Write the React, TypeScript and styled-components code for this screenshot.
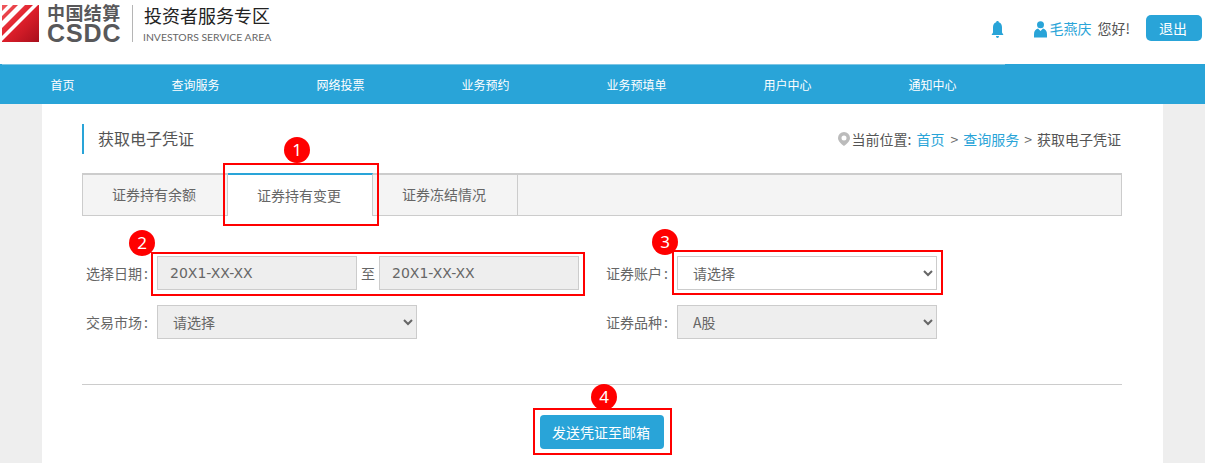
import React from "react";
import styled, { createGlobalStyle } from "styled-components";

const Global = createGlobalStyle`
  html, body { margin: 0; padding: 0; background: #eeeeee; height: 463px; overflow: hidden; }
  body { font-family: "Noto Sans CJK SC", "Liberation Sans", sans-serif; font-size: 14px; color: #666; }
  * { box-sizing: border-box; }
`;

const Page = styled.div`position: relative; width: 1205px; height: 463px; overflow: hidden;`;

const Header = styled.header`
  height: 64px; background: #fff; display: flex; justify-content: space-between;
  align-items: flex-start; padding: 5px 3px 0 2px;
`;
const Brand = styled.div`display: flex; align-items: flex-start;`;
const LogoMark = styled.svg`width: 37px; height: 37px; display: block; flex: none;`;
const LogoWords = styled.div`
  width: 74px; margin-left: 8px; display: flex; flex-direction: column; color: #58585a; height: 37px;
`;
const LogoCn = styled.span`font-size: 18px; line-height: 18px; font-weight: 700; letter-spacing: 0.4px; white-space: nowrap; margin-top: -2px;`;
const LogoEn = styled.span`
  font-family: "Liberation Sans", sans-serif; font-size: 25px; line-height: 19px; font-weight: 700;
  letter-spacing: 0.9px; white-space: nowrap; margin-top: 3px;
`;
const BrandRule = styled.div`width: 1px; height: 37px; background: #b5b5b5; margin: 0 11px 0 11px;`;
const BrandTitle = styled.div`display: flex; flex-direction: column;`;
const TitleCn = styled.span`font-size: 18px; line-height: 20px; color: #222; white-space: nowrap;`;
const TitleEn = styled.span`
  font-family: "Lato", sans-serif; font-size: 10.4px; line-height: 12px; margin-top: 6px; margin-left: -1px; color: #666; white-space: nowrap;
`;

const UserBar = styled.div`display: flex; align-items: center; height: 26px; margin-top: 10px;`;
const IconBell = styled.svg`width: 13px; height: 17px; fill: #29a4d8; margin-right: 30px; margin-top: 3px;`;
const IconUser = styled.svg`width: 13px; height: 17px; fill: #29a4d8; margin-right: 2px; margin-top: 3px;`;
const UserName = styled.span`color: #29a4d8; font-size: 14px; line-height: 20px; margin-right: 6px;`;
const Greeting = styled.span`color: #555; font-size: 14px; line-height: 20px; margin-right: 16px;`;
const Logout = styled.button`
  width: 56px; height: 26px; border: 0; border-radius: 5px; background: #29a4d8; color: #fff;
  font: inherit; font-size: 14px; padding: 0 2px 0 0;
`;

const Nav = styled.nav`height: 40px; background: #29a4d8; display: flex; padding-left: 2px;`;
const NavItem = styled.a`
  padding: 0 48.5px; line-height: 39px; height: 40px; color: #fff; font-size: 12px; white-space: nowrap;
  border-top: 1px solid #7fc6e4;
`;

const Content = styled.main`
  width: 1121px; height: 359px; margin-left: 42px; background: #fff; padding: 20px 41px 0 40px;
`;
const TitleRow = styled.div`display: flex; justify-content: space-between; align-items: center; height: 30px;`;
const PageTitle = styled.h1`
  margin: 0; font-size: 16px; line-height: 28px; padding-bottom: 2px; font-weight: 400; color: #555; border-left: 2px solid #29a4d8; padding-left: 14px;
`;
const Crumbs = styled.div`display: flex; align-items: center; color: #555; font-size: 14px; white-space: nowrap; padding-right: 1px;`;
const PinIcon = styled.svg`width: 12px; height: 14px; fill: #bbb; margin-right: 2px;`;
const CrumbLabel = styled.span`margin-right: 5px;`;
const CrumbLink = styled.a`color: #29a4d8;`;
const CrumbSep = styled.span<{ $gap?: number }>`margin: 0 5px 0 ${(p) => p.$gap ?? 5}px; color: #666;`;

const Tabs = styled.div`
  margin-top: 19px; height: 43px; display: flex; background: #f4f4f4;
  border: 1px solid #ccc; border-top-width: 2px;
`;
const Tab = styled.div<{ $active?: boolean }>`
  width: 145px; height: ${(p) => (p.$active ? "43px" : "41px")}; margin-top: ${(p) => (p.$active ? "-2px" : "0")};
  display: flex; align-items: center; justify-content: center; font-size: 14px; color: #666;
  background: ${(p) => (p.$active ? "#fff" : "transparent")};
  border-right: 1px solid #ccc;
  border-top: ${(p) => (p.$active ? "2px solid #29a4d8" : "0")};
  padding: 0 2px ${(p) => (p.$active ? "2px" : "4px")} 0;
`;

const FormGrid = styled.div`
  display: grid; grid-template-columns: 520px 520px; row-gap: 15px; margin-top: 40px; padding-left: 4px;
`;
const Field = styled.div`display: flex; align-items: center; height: 34px;`;
const FieldLabel = styled.label`width: 71px; flex: none; font-size: 14px; color: #666; white-space: nowrap;`;
const Colon = styled.span`margin-left: 2px;`;
const DateInput = styled.input`
  width: 200px; height: 34px; border: 1px solid #ccc; background: #eee; color: #666; padding: 0 12px;
  font-family: "DejaVu Sans", sans-serif; font-size: 14px; outline: 0; border-radius: 0;
`;
const To = styled.span`width: 22px; text-align: center; font-size: 14px; color: #666;`;
const Select = styled.select<{ $light?: boolean }>`
  width: 260px; height: 34px; border: 1px solid #ccc; border-radius: 0; padding: 0 11px;
  background-color: ${(p) => (p.$light ? "#fff" : "#eee")}; color: #666;
  font-family: "Noto Sans CJK SC", sans-serif; font-size: 14px; outline: 0;
`;

const Divider = styled.hr`margin: 45px 0 0; border: 0; border-top: 1px solid #ccc;`;
const Actions = styled.div`display: flex; justify-content: center; padding-top: 30px;`;
const SendButton = styled.button`
  width: 124px; height: 34px; border: 0; border-radius: 4px; background: #29a4d8; color: #fff;
  font: inherit; font-size: 14px; padding: 0 2px 0 0;
`;

const Callout = styled.div<{ $x: number; $y: number; $w: number; $h: number }>`
  position: absolute; left: ${(p) => p.$x}px; top: ${(p) => p.$y}px; width: ${(p) => p.$w}px; height: ${(p) => p.$h}px;
  border: 2px solid #f00; pointer-events: none;
`;
const Marker = styled.div<{ $x: number; $y: number }>`
  position: absolute; left: ${(p) => p.$x - 13}px; top: ${(p) => p.$y - 13}px; width: 26px; height: 26px; border-radius: 50%;
  background: #f00; color: #fff; text-align: center; line-height: 26px; font-family: "Noto Sans", sans-serif; font-size: 17px;
`;

const navItems = ["首页", "查询服务", "网络投票", "业务预约", "业务预填单", "用户中心", "通知中心"];
const callouts = [
  { n: 1, x: 223, y: 163, w: 156, h: 63, mx: 297, my: 150 },
  { n: 2, x: 151, y: 252, w: 434, h: 44, mx: 142, my: 243 },
  { n: 3, x: 672, y: 250, w: 271, h: 45, mx: 665, my: 242 },
  { n: 4, x: 533, y: 408, w: 139, h: 47, mx: 604, my: 397 },
];

const FormLabel = ({ text }: { text: string }) => (
  <FieldLabel>
    {text}
    <Colon>:</Colon>
  </FieldLabel>
);

export default function App() {
  return (
    <Page>
      <Global />
      <Header>
        <Brand>
          <LogoMark viewBox="0 0 37 37">
            <defs>
              <linearGradient id="lg" x1="0" y1="0" x2="1" y2="1">
                <stop offset="0" stopColor="#ef5a5e" />
                <stop offset="0.45" stopColor="#e2202c" />
                <stop offset="1" stopColor="#a80f1c" />
              </linearGradient>
            </defs>
            <rect width="37" height="37" fill="url(#lg)" />
            <path d="M0 6 6 0h5L0 11zM0 16 16 0h7L0 23zM0 31 31 0h5L0 36z" fill="#fff" />
          </LogoMark>
          <LogoWords>
            <LogoCn>中国结算</LogoCn>
            <LogoEn>CSDC</LogoEn>
          </LogoWords>
          <BrandRule />
          <BrandTitle>
            <TitleCn>投资者服务专区</TitleCn>
            <TitleEn>INVESTORS SERVICE AREA</TitleEn>
          </BrandTitle>
        </Brand>
        <UserBar>
          <IconBell viewBox="0 0 13 17">
            <path d="M6.500 0c.8 0 1.300.5 1.300 1.200C10.200 1.900 11 4 11 6.500V11.500l1.500 2.500H.5L2 11.500V6.500C2 4 2.800 1.900 5.200 1.200 5.200.5 5.700 0 6.500 0zM5 15h3C8 16.200 7.300 17 6.500 17S5 16.200 5 15z" />
          </IconBell>
          <IconUser viewBox="0 0 13 17">
            <circle cx="6.500" cy="3.800" r="3.500" />
            <path d="M4 7.600 6.500 10 9 7.600C11.500 8.300 13 10 13 13.500V16.500H0V13.500C0 10 1.500 8.300 4 7.600z" />
          </IconUser>
          <UserName>毛燕庆</UserName>
          <Greeting>您好!</Greeting>
          <Logout>退出</Logout>
        </UserBar>
      </Header>
      <Nav>
        {navItems.map((t) => (
          <NavItem key={t}>{t}</NavItem>
        ))}
      </Nav>
      <Content>
        <TitleRow>
          <PageTitle>获取电子凭证</PageTitle>
          <Crumbs>
            <PinIcon viewBox="0 0 12 14">
              <path d="M6 0a6 6 0 0 1 6 6c0 3-3.500 6.500-6 8-2.500-1.500-6-5-6-8a6 6 0 0 1 6-6zm0 3.500a2.500 2.500 0 1 0 0 5 2.500 2.500 0 0 0 0-5z" fillRule="evenodd" />
            </PinIcon>
            <CrumbLabel>当前位置:</CrumbLabel>
            <CrumbLink>首页</CrumbLink>
            <CrumbSep $gap={6}>&gt;</CrumbSep>
            <CrumbLink>查询服务</CrumbLink>
            <CrumbSep>&gt;</CrumbSep>
            获取电子凭证
          </Crumbs>
        </TitleRow>
        <Tabs>
          <Tab>证券持有余额</Tab>
          <Tab $active>证券持有变更</Tab>
          <Tab>证券冻结情况</Tab>
        </Tabs>
        <FormGrid>
          <Field>
            <FormLabel text="选择日期" />
            <DateInput defaultValue="20X1-XX-XX" readOnly />
            <To>至</To>
            <DateInput defaultValue="20X1-XX-XX" readOnly />
          </Field>
          <Field>
            <FormLabel text="证券账户" />
            <Select $light defaultValue="请选择">
              <option>请选择</option>
            </Select>
          </Field>
          <Field>
            <FormLabel text="交易市场" />
            <Select defaultValue="请选择">
              <option>请选择</option>
            </Select>
          </Field>
          <Field>
            <FormLabel text="证券品种" />
            <Select defaultValue="A股">
              <option>A股</option>
            </Select>
          </Field>
        </FormGrid>
        <Divider />
        <Actions>
          <SendButton>发送凭证至邮箱</SendButton>
        </Actions>
      </Content>
      {callouts.map((c) => (
        <React.Fragment key={c.n}>
          <Callout $x={c.x} $y={c.y} $w={c.w} $h={c.h} />
          <Marker $x={c.mx} $y={c.my}>{c.n}</Marker>
        </React.Fragment>
      ))}
    </Page>
  );
}
